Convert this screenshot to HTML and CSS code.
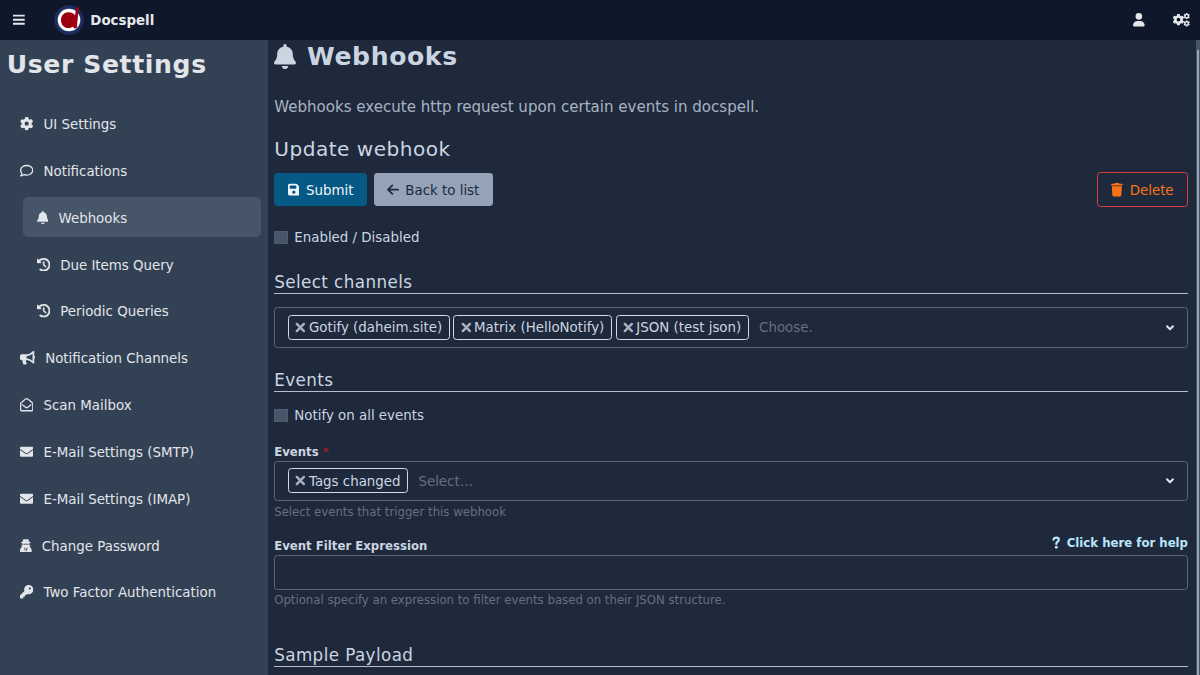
FILE: index.html
```html
<!DOCTYPE html>
<html lang="en">
<head>
<meta charset="utf-8">
<title>Docspell</title>
<link rel="stylesheet" href="styles.css">
</head>
<body>
<svg class="defs" aria-hidden="true">
  <symbol id="gear" viewBox="0 0 512 512"><path fill-rule="evenodd" d="M495.9 166.6c3.2 8.7 .5 18.4-6.4 24.6l-43.3 39.4c1.1 8.3 1.7 16.8 1.7 25.4s-.6 17.1-1.7 25.4l43.3 39.4c6.9 6.2 9.6 15.9 6.4 24.6c-4.4 11.9-9.7 23.3-15.8 34.3l-4.7 8.1c-6.6 11-14 21.4-22.1 31.2c-5.9 7.2-15.7 9.6-24.5 6.8l-55.7-17.7c-13.4 10.3-28.2 18.9-44 25.4l-12.5 57.1c-2 9.1-9 16.3-18.2 17.8c-13.8 2.3-28 3.5-42.5 3.5s-28.7-1.2-42.5-3.5c-9.2-1.5-16.2-8.7-18.2-17.8l-12.5-57.1c-15.8-6.5-30.6-15.1-44-25.4L83.1 425.9c-8.8 2.8-18.6 .3-24.5-6.8c-8.1-9.8-15.5-20.2-22.1-31.2l-4.7-8.1c-6.1-11-11.4-22.4-15.8-34.3c-3.2-8.7-.5-18.4 6.4-24.6l43.3-39.4C64.6 273.1 64 264.6 64 256s.6-17.1 1.7-25.4L22.4 191.2c-6.9-6.2-9.6-15.9-6.4-24.6c4.4-11.9 9.7-23.3 15.8-34.3l4.7-8.1c6.6-11 14-21.4 22.1-31.2c5.9-7.2 15.7-9.6 24.5-6.8l55.7 17.7c13.4-10.3 28.2-18.9 44-25.4l12.5-57.1c2-9.1 9-16.3 18.2-17.8C227.3 1.2 241.5 0 256 0s28.7 1.2 42.5 3.5c9.2 1.5 16.2 8.7 18.2 17.8l12.5 57.1c15.8 6.5 30.6 15.1 44 25.4l55.7-17.7c8.8-2.8 18.6-.3 24.5 6.8c8.1 9.8 15.5 20.2 22.1 31.2l4.7 8.1c6.1 11 11.4 22.4 15.8 34.3zM256 336a80 80 0 1 0 0-160 80 80 0 1 0 0 160z"/></symbol>
  <symbol id="bell" viewBox="0 0 448 512"><path d="M224 0c-17.7 0-32 14.3-32 32V51.2C119 66 64 130.6 64 208v18.8c0 47-17.3 92.4-48.5 127.6l-7.4 8.3c-8.4 9.4-10.4 22.9-5.3 34.4S19.4 416 32 416H416c12.6 0 24-7.4 29.2-18.9s3.1-25-5.3-34.4l-7.4-8.3C401.3 319.2 384 273.9 384 226.8V208c0-77.4-55-142-128-156.8V32c0-17.7-14.3-32-32-32zm45.3 493.3c12-12 18.7-28.3 18.7-45.3H160c0 17 6.7 33.3 18.7 45.3s28.3 18.7 45.3 18.7s33.3-6.7 45.3-18.7z"/></symbol>
  <symbol id="history" viewBox="0 0 512 512"><path d="M75 75L41 41C25.9 25.9 0 36.6 0 57.9V168c0 13.3 10.7 24 24 24H134.1c21.4 0 32.1-25.9 17-41l-30.8-30.8C155 85.5 203 64 256 64c106 0 192 86 192 192s-86 192-192 192c-40.8 0-78.6-12.7-109.7-34.4c-14.5-10.1-34.4-6.6-44.6 7.9s-6.6 34.4 7.9 44.6C151.2 495 201.7 512 256 512c141.4 0 256-114.6 256-256S397.4 0 256 0C185.3 0 121.3 28.7 75 75zm181 53c-13.3 0-24 10.7-24 24V256c0 6.4 2.5 12.5 7 17l72 72c9.4 9.4 24.6 9.4 33.9 0s9.4-24.6 0-33.9l-65-65V152c0-13.3-10.7-24-24-24z" stroke="currentColor" stroke-width="14"/></symbol>
  <symbol id="envelope" viewBox="0 0 512 512"><path d="M502.3 190.8c3.9-3.1 9.7-.2 9.7 4.7V400c0 26.5-21.5 48-48 48H48c-26.5 0-48-21.5-48-48V195.6c0-5 5.7-7.8 9.7-4.7 22.4 17.4 52.1 39.5 154.1 113.6 21.1 15.4 56.7 47.8 92.2 47.6 35.7.3 72-32.8 92.3-47.6 102-74.1 131.6-96.3 154-113.7zM256 320c23.2.4 56.6-29.2 73.4-41.4 132.7-96.3 142.8-104.7 173.4-128.7 5.8-4.5 9.2-11.5 9.2-18.9v-19c0-26.5-21.5-48-48-48H48c-26.5 0-48 21.5-48 48v19c0 7.4 3.4 14.3 9.2 18.9 30.6 23.9 40.7 32.4 173.4 128.7 16.8 12.2 50.2 41.8 73.4 41.4z"/></symbol>
  <symbol id="times" viewBox="0 0 320 512"><path d="M40 136L280 376M280 136L40 376" fill="none" stroke="currentColor" stroke-width="84" stroke-linecap="round"/></symbol>
  <symbol id="angle" viewBox="0 0 320 512"><path d="M46 204L160 312L274 204" fill="none" stroke="currentColor" stroke-width="78" stroke-linecap="round" stroke-linejoin="round"/></symbol>
</svg>

<header class="topbar">
  <svg class="icon w448 menu" viewBox="0 0 448 512"><path d="M0 64h448v72H0zM0 220h448v72H0zM0 376h448v72H0z"/></svg>
  <svg class="logo" viewBox="0 0 30 30">
    <circle cx="15" cy="15" r="14.7" fill="#1d2d62"/>
    <circle cx="15" cy="15" r="11.3" fill="#fff"/>
    <path d="M14.3 7.3C18 7.3 20.3 9 21 10.5L22.3 1.8C24 1.5 25 2 24.8 3.4L22.5 22.6L21 23.7L18.6 21.8C17.6 22.6 16 23 14.4 23C10 23 7 19.6 7 15.2C7 10.7 10.2 7.3 14.3 7.3Z" fill="#9c0012"/>
    <path d="M22.7 7V23" stroke="#9c0012" stroke-width="1"/>
  </svg>
  <span class="brand">Docspell</span>
  <svg class="icon w448 user" viewBox="0 0 448 512"><path d="M224 256a128 128 0 1 0 0-256 128 128 0 1 0 0 256zM174.3 304C77.7 304 0 381.7 0 478.3 0 497 15 512 33.7 512h380.6c18.7 0 33.7-15 33.7-33.7C448 381.7 370.3 304 273.7 304z"/></svg>
  <svg class="icon w640" viewBox="0 0 640 512"><use href="#gear" x="-16" y="32" width="448" height="448"/><use href="#gear" x="400" y="-4" width="248" height="248"/><use href="#gear" x="400" y="276" width="248" height="248"/></svg>
</header>

<div class="page">
  <aside class="sidebar">
    <h1 class="title side-title">User Settings</h1>
    <nav class="menu-list">
      <a class="item"><svg class="icon"><use href="#gear"/></svg>UI Settings</a>
      <a class="item"><svg class="icon" viewBox="0 0 512 512"><path d="M256 56C375 56 488 132 488 240S375 424 256 424C220 424 187 417 158 405C122 436 75 456 28 456C54 430 69 397 74 361C42 328 24 286 24 240C24 132 137 56 256 56Z" fill="none" stroke="currentColor" stroke-width="52" stroke-linejoin="round"/></svg>Notifications</a>
      <a class="item sub active"><svg class="icon w448"><use href="#bell"/></svg>Webhooks</a>
      <a class="item sub"><svg class="icon"><use href="#history"/></svg>Due Items Query</a>
      <a class="item sub"><svg class="icon"><use href="#history"/></svg>Periodic Queries</a>
      <a class="item"><svg class="icon w576" viewBox="0 0 576 512"><path fill-rule="evenodd" d="M576 240c0-23.6-13-44-32-55.1V32c0-8.700-7-32-32-32-7.100 0-14.200 2.400-20 7l-85 68C364.300 109.200 310.700 128 256 128H64c-35.300 0-64 28.700-64 64v96c0 35.400 28.700 64 64 64h33.700c-1.400 10.500-2.200 21.100-2.200 32 0 39.800 9.300 77.400 25.600 110.900 5.200 10.700 16.500 17.100 28.400 17.100h74.300c26 0 41.700-29.800 25.900-50.600-16.400-21.500-26.200-48.400-26.200-77.400 0-11.100 1.600-21.800 4.400-32H256c54.700 0 108.300 18.800 151 53l85 68c5.700 4.600 12.700 7 20 7 24.900 0 32-22.800 32-32V295.100C563 284 576 263.600 576 240zm-96 141.400l-33-26.400C393 311.800 325.100 288 256 288v-96c69.100 0 137-23.800 191-67l33-26.400z"/></svg>Notification Channels</a>
      <a class="item"><svg class="icon" viewBox="0 0 512 512"><path d="M24 200L200 50Q256 2 312 50L488 200V456Q488 488 456 488H56Q24 488 24 456ZM90 262L216 358Q256 388 296 358L422 262" fill="none" stroke="currentColor" stroke-width="48" stroke-linecap="round"/></svg>Scan Mailbox</a>
      <a class="item"><svg class="icon"><use href="#envelope"/></svg>E-Mail Settings (SMTP)</a>
      <a class="item"><svg class="icon"><use href="#envelope"/></svg>E-Mail Settings (IMAP)</a>
      <a class="item"><svg class="icon w448" viewBox="0 0 448 512"><path fill-rule="evenodd" d="M155 0C175 0 205 18 224 18S273 0 293 0C325 0 343 60 352 102C388 110 410 118 410 130C410 143 388 153 354 161V192C354 208 350 222 345 235H384C400 235 407 248 402 262L370 306C416 330 448 385 448 440V480Q448 512 416 512H32Q0 512 0 480V440C0 385 32 330 78 306L46 262C41 248 48 235 64 235H103C98 222 94 208 94 192V161C60 153 38 143 38 130C38 118 60 110 96 102C105 60 123 0 155 0ZM128 180C128 214 148 222 174 222C202 222 207 202 213 190H235C241 202 246 222 274 222C300 222 320 214 320 180ZM160 320L194 480L214 384L192 340ZM288 320L254 480L234 384L256 340Z"/></svg>Change Password</a>
      <a class="item"><svg class="icon" viewBox="0 0 512 512"><path fill-rule="evenodd" d="M336 352c97.200 0 176-78.800 176-176S433.200 0 336 0S160 78.800 160 176c0 18.700 2.900 36.800 8.300 53.700L7 391c-4.500 4.500-7 10.600-7 17v80c0 13.300 10.700 24 24 24h80c13.300 0 24-10.700 24-24V448h40c13.300 0 24-10.700 24-24V384h40c6.400 0 12.500-2.500 17-7l33.300-33.300c16.900 5.400 35 8.300 53.700 8.300zM376 96a40 40 0 1 1 0 80 40 40 0 1 1 0-80z"/></svg>Two Factor Authentication</a>
    </nav>
  </aside>

  <main class="content">
    <h1 class="title main-title"><svg class="icon big"><use href="#bell"/></svg>Webhooks</h1>
    <p class="intro">Webhooks execute http request upon certain events in docspell.</p>
    <h2 class="heading">Update webhook</h2>
    <div class="actions">
      <button class="btn primary"><svg class="icon w448" viewBox="0 0 448 512"><path fill-rule="evenodd" d="M64 32C28.700 32 0 60.700 0 96V416c0 35.300 28.700 64 64 64H384c35.300 0 64-28.700 64-64V173.300c0-17-6.700-33.300-18.700-45.300L352 50.700C340 38.700 323.700 32 306.700 32H64zm0 96c0-17.700 14.300-32 32-32H288c17.700 0 32 14.300 32 32v64c0 17.700-14.300 32-32 32H96c-17.700 0-32-14.300-32-32V128zM224 288a64 64 0 1 1 0 128 64 64 0 1 1 0-128z"/></svg>Submit</button>
      <button class="btn secondary"><svg class="icon w448" viewBox="0 0 448 512"><path d="M420 256H42M202 92L38 256L202 420" fill="none" stroke="currentColor" stroke-width="66" stroke-linecap="round" stroke-linejoin="round"/></svg>Back to list</button>
      <button class="btn danger"><svg class="icon w448" viewBox="0 0 448 512"><path d="M135.200 17.700L128 32H32C14.300 32 0 46.300 0 64S14.300 96 32 96H416c17.700 0 32-14.300 32-32s-14.300-32-32-32H320l-7.200-14.300C307.400 6.800 296.300 0 284.200 0H163.800c-12.100 0-23.200 6.800-28.600 17.700zM416 128H32L53.200 467c1.600 25.300 22.600 45 47.900 45H346.900c25.300 0 46.300-19.700 47.900-45L416 128z"/></svg>Delete</button>
    </div>
    <label class="check enabled"><span class="box"></span>Enabled / Disabled</label>

    <h3 class="section channels">Select channels</h3>
    <div class="select">
      <span class="chip"><svg class="icon x"><use href="#times"/></svg>Gotify (daheim.site)</span>
      <span class="chip"><svg class="icon x"><use href="#times"/></svg>Matrix (HelloNotify)</span>
      <span class="chip"><svg class="icon x"><use href="#times"/></svg>JSON (test json)</span>
      <span class="placeholder">Choose.</span>
      <svg class="icon caret"><use href="#angle"/></svg>
    </div>

    <h3 class="section events">Events</h3>
    <label class="check notify"><span class="box"></span>Notify on all events</label>
    <div class="label-row"><span class="label">Events <span class="required">*</span></span></div>
    <div class="select">
      <span class="chip"><svg class="icon x"><use href="#times"/></svg>Tags changed</span>
      <span class="placeholder">Select…</span>
      <svg class="icon caret"><use href="#angle"/></svg>
    </div>
    <p class="hint">Select events that trigger this webhook</p>

    <div class="label-row filter">
      <span class="label">Event Filter Expression</span>
      <a class="help"><svg class="icon question" viewBox="0 0 320 512"><path d="M55 140C70 80 110 62 165 62C225 62 262 96 262 145C262 215 165 225 165 300V312" fill="none" stroke="currentColor" stroke-width="88" stroke-linecap="round"/><circle cx="165" cy="440" r="58"/></svg>Click here for help</a>
    </div>
    <div class="input"></div>
    <p class="hint">Optional specify an expression to filter events based on their JSON structure.</p>
    <h3 class="section payload">Sample Payload</h3>
  </main>
  <div class="scrollbar"><div class="thumb"></div></div>
</div>
</body>
</html>
```
FILE: styles.css
```css
* { box-sizing: border-box; }
html { font-size: 13.39px; }
body {
  margin: 0;
  height: 675px;
  overflow: hidden;
  background: #1e293b;
  color: #cbd5e1;
  font-family: "DejaVu Sans", sans-serif;
  font-size: 1rem;
  line-height: 20px;
}
h1, h2, h3, p { margin: 0; font-weight: 400; }
.defs { display: none; }
.icon { width: 1em; height: 1em; fill: currentColor; flex: none; }
.w448 { width: .875em; }
.w576 { width: 1.125em; }
.w640 { width: 1.25em; }

.topbar {
  display: flex;
  align-items: center;
  height: 40px;
  padding: 0 10px 0 13px;
  background: #0f172a;
  color: #e5e7eb;
}
.menu { margin-right: 28.8px; }
.logo { width: 30px; height: 30px; }
.brand { margin-left: 6.8px; padding-top: 1.5px; font-weight: 700; }
.user { margin-left: auto; margin-right: 28.5px; }

.page { display: flex; height: 635px; }
.sidebar {
  width: 267.5px;
  flex: none;
  background: #334155;
  color: #e2e5ea;
}
.title { font-size: 25.1px; font-weight: 700; letter-spacing: .025em; line-height: 30px; }
.side-title { padding: 10px 0 0 6.7px; }
.menu-list { display: flex; flex-direction: column; gap: 6.7px; padding: 23.6px 6.7px 0; }
.item {
  display: flex;
  align-items: center;
  gap: 10px;
  height: 40.15px;
  padding: 2.8px 0 0 13.4px;
  border-radius: 5px;
}
.item .icon { margin-bottom: 2.4px; }
.sub { margin-left: 16.7px; }
.active { background: #475569; }

.content { flex: 1; min-width: 0; padding: 1px 7.5px 0 6.7px; }
.main-title { display: flex; align-items: center; gap: 10.8px; height: 31px; }
.big { width: 22px; height: 25.1px; }
.intro { margin-top: 23px; height: 24px; line-height: 24px; font-size: 15.06px; opacity: .8; }
.heading { margin-top: 17px; height: 26px; line-height: 26px; font-size: 20.08px; letter-spacing: .025em; }
.actions { display: flex; align-items: center; gap: 6.7px; height: 36px; margin-top: 9.6px; }
.btn {
  display: flex;
  align-items: center;
  gap: 6.7px;
  height: 33.5px;
  padding: 2.6px 13.4px 0;
  border: 0;
  border-radius: 3.4px;
  font: inherit;
}
.btn .icon { margin-bottom: 1.8px; }
.primary { background: #075985; color: #f1f5f9; }
.secondary { background: #94a3b8; color: #1e293b; }
.danger { margin-left: auto; height: 35px; border: 1px solid #dc3b3f; background: none; color: #f97316; }
.check { display: flex; align-items: center; gap: 6.7px; height: 20px; padding-top: 1px; }
.box { width: 13.4px; height: 13.4px; margin-bottom: 1.4px; background: #475569; border: 1px solid #4e5c70; }
.enabled { margin-top: 20.4px; }
.section {
  height: 24px;
  line-height: 24px;
  font-size: 16.74px;
  letter-spacing: .025em;
  border-bottom: 1px solid #b4bfcc;
}
.channels { margin-top: 22px; }
.select {
  display: flex;
  align-items: center;
  gap: 3.4px;
  height: 40.4px;
  padding: 0 12px 0 13px;
  border: 1px solid #5b6879;
  border-radius: 3.4px;
}
.channels + .select { margin-top: 13.5px; }
.chip {
  display: flex;
  align-items: center;
  gap: 2.8px;
  height: 25px;
  padding: 1.2px 6.8px 0 6.3px;
  border: 1px solid #d5dae1;
  border-radius: 3.4px;
}
.x { width: 10.7px; height: 15px; margin-bottom: 1.4px; opacity: .8; }
.placeholder { margin-left: 6.7px; padding-top: 1.2px; color: #667080; }
.caret { width: 10px; margin-left: auto; color: #e2e8f0; }
.events { margin-top: 20.3px; }
.notify { margin-top: 13.500px; }
.label-row { display: flex; justify-content: space-between; height: 18px; line-height: 18px; margin-top: 17.1px; font-size: 11.72px; font-weight: 700; }
.required { color: #b91c1c; font-weight: 400; }
.hint { height: 17px; margin-top: 2.5px; line-height: 17px; font-size: 11.72px; color: #667080; }
.filter { margin-top: 16.2px; }
.help { display: flex; align-items: center; gap: 6.7px; height: 13px; color: #bae6fd; }
.question { width: 8.4px; height: 13px; margin-bottom: 1px; }
.input { height: 35px; border: 1px solid #5b6879; border-radius: 3.4px; }
.payload { margin-top: 34px; }

.scrollbar { width: 4.5px; background: #475569; padding: 10px 1px 0; }
.thumb { height: 100%; background: #94a3b8; }
```
